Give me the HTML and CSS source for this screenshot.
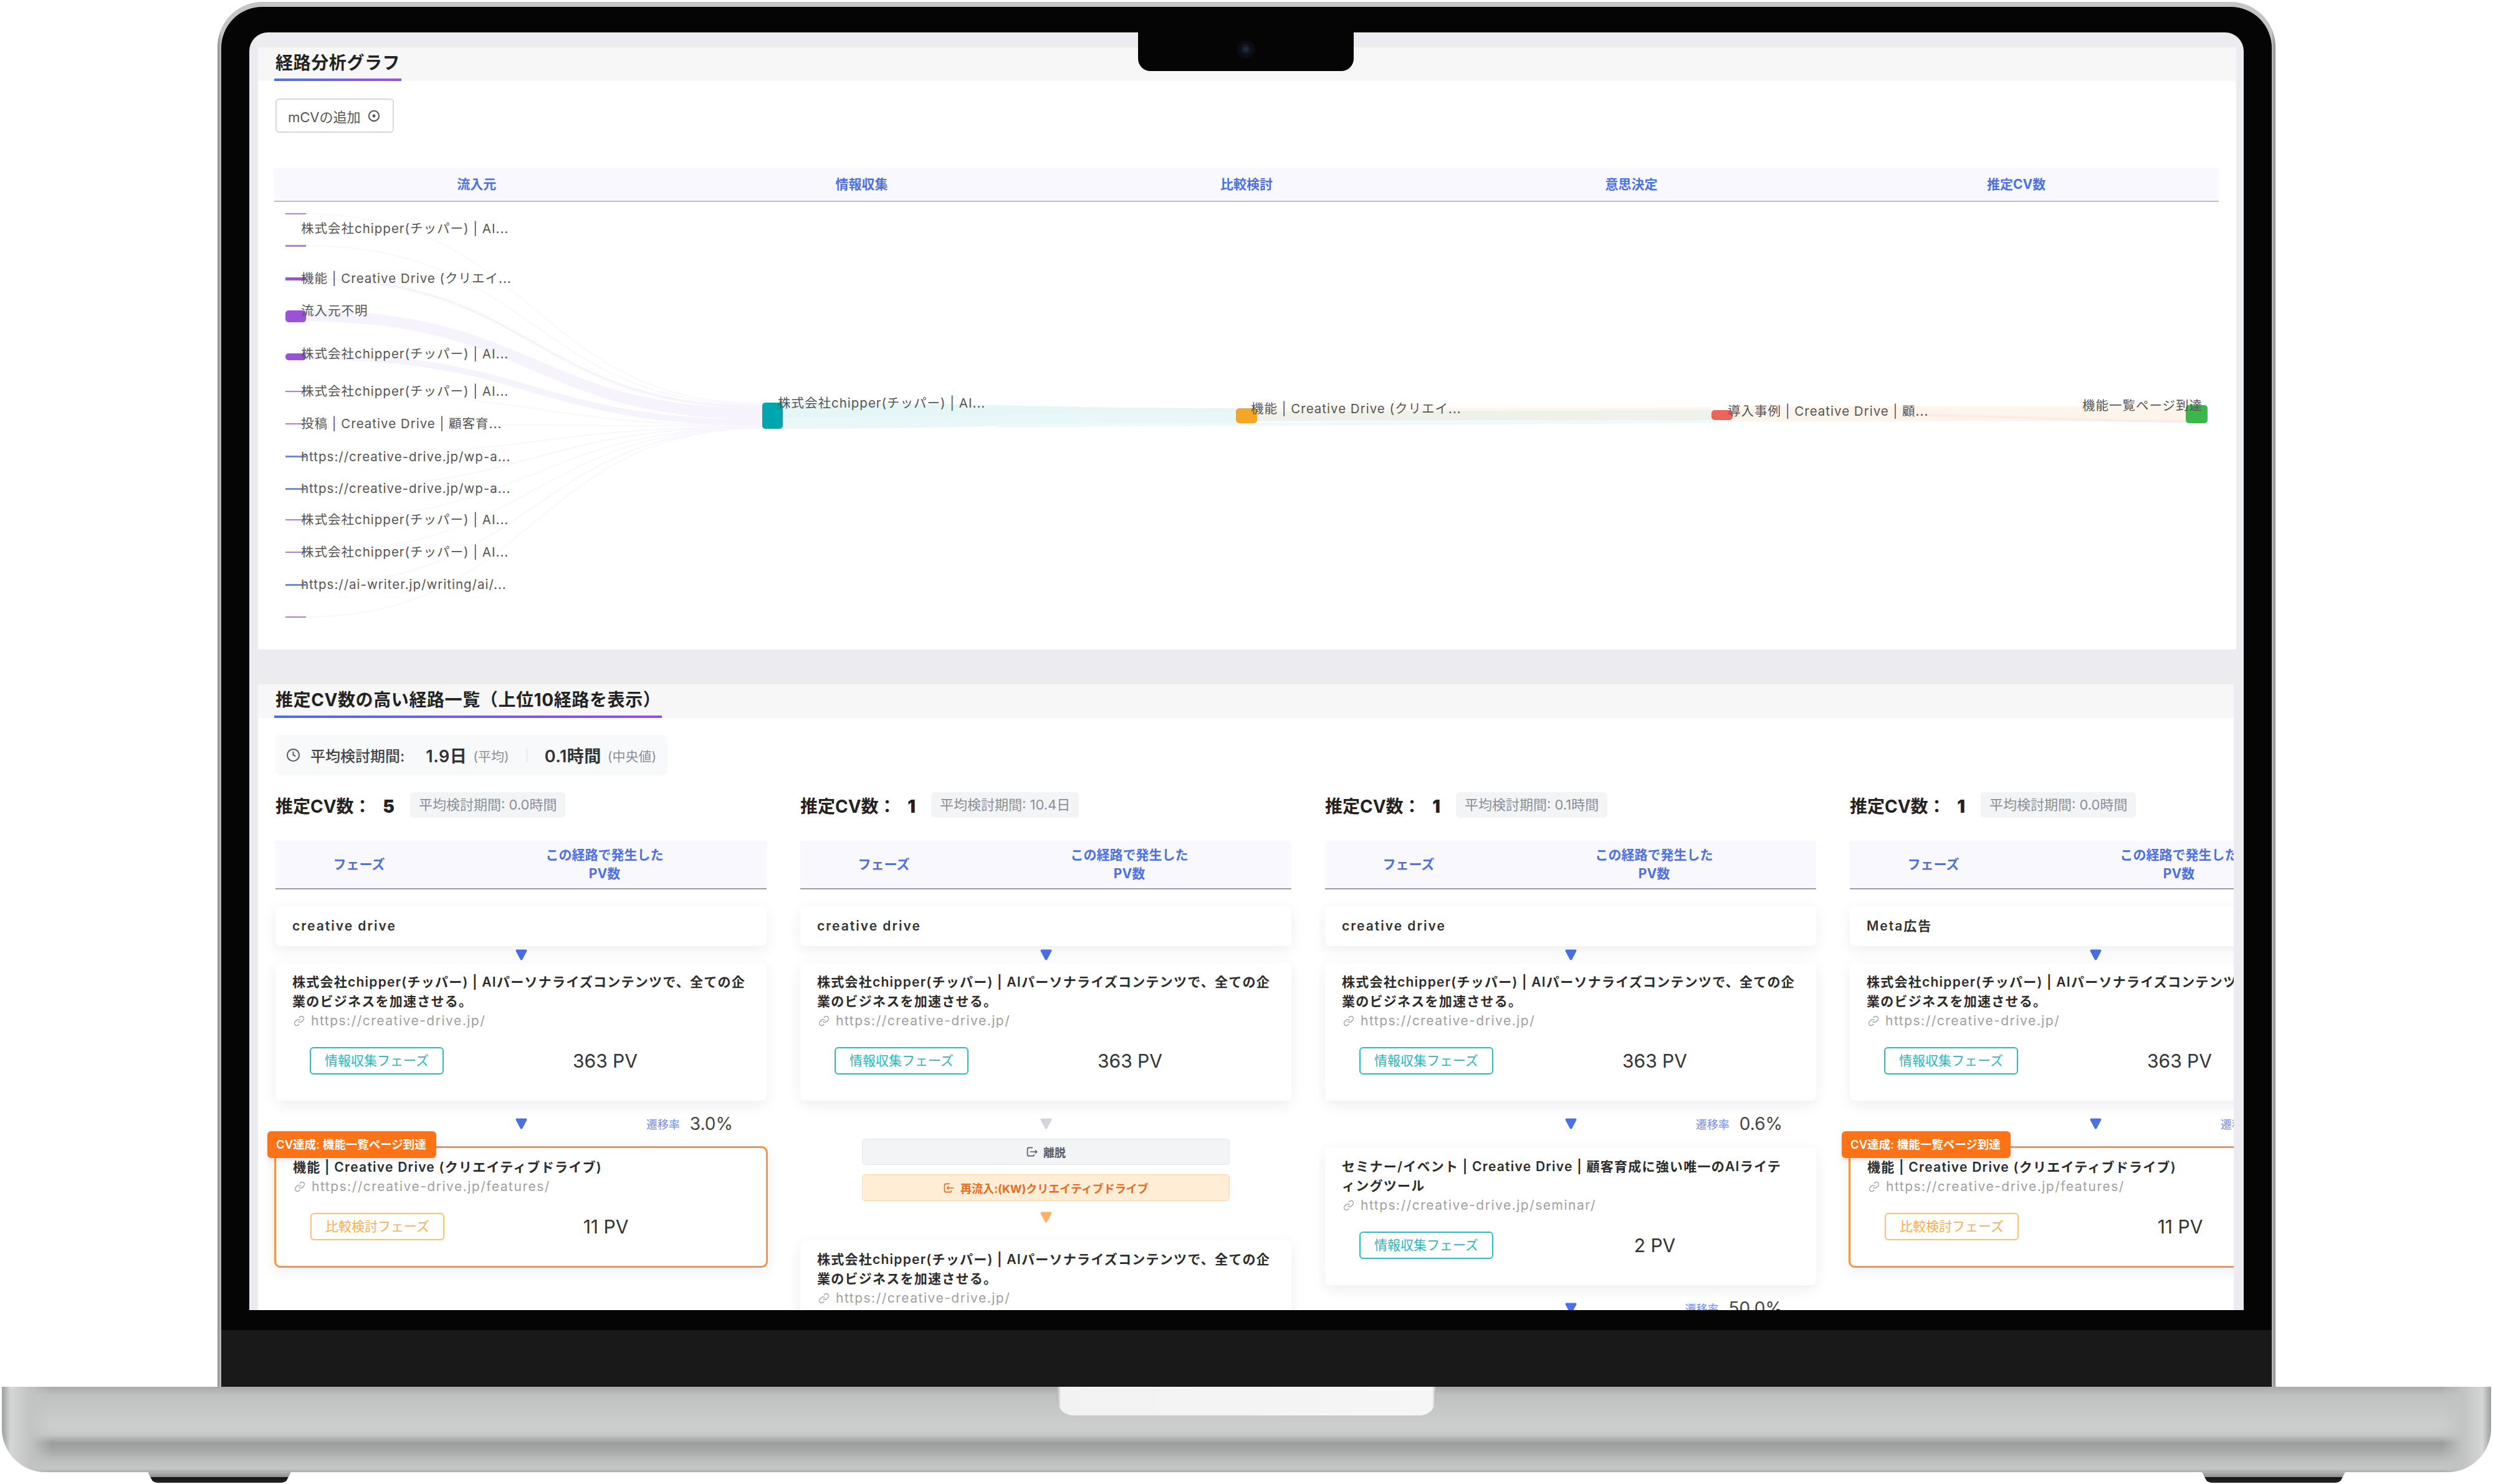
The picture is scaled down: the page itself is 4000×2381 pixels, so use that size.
FILE: index.html
```html
<!DOCTYPE html>
<html lang="ja">
<head>
    <meta charset="UTF-8">
    <title>経路分析グラフ</title>
    <link rel="stylesheet" href="styles.css">
</head>
<body>
    <svg class="defs" aria-hidden="true">
        <symbol id="tri" viewBox="0 0 19 18">
            <path d="M2.5 0.5h14c1.6 0 2.4 1.4 1.7 2.7l-7 13.2c-.8 1.4-2.6 1.4-3.4 0l-7-13.2C.1 1.9.9.5 2.5.5z"/>
        </symbol>
        <symbol id="link" viewBox="0 0 24 24">
            <path d="M10 13a5 5 0 0 0 7.54.54l3-3a5 5 0 0 0-7.07-7.07l-1.72 1.71"/>
            <path d="M14 11a5 5 0 0 0-7.54-.54l-3 3a5 5 0 0 0 7.07 7.07l1.71-1.71"/>
        </symbol>
    </svg>

    <div class="laptop">
        <div class="lid">
            <div class="bezel">
                <div class="notch"><span class="camera"></span></div>
                <div class="screen">

                    <section class="panel">
                        <div class="panel-head"><h2 class="section-title">経路分析グラフ</h2></div>
                        <div class="graph-body">
                            <button class="add-btn">mCVの追加
                                <svg class="add-icon" viewBox="0 0 20 20"><circle cx="10" cy="10" r="8.2"/><circle class="dot" cx="10" cy="10" r="2.4"/></svg>
                            </button>
                            <div class="phase-head">
                                <span>流入元</span><span>情報収集</span><span>比較検討</span><span>意思決定</span><span>推定CV数</span>
                            </div>
                            <svg class="sankey" viewBox="440 323 3120 719">
                                <g class="links-in" fill="none">
                                    <path class="thin" stroke-width="2" d="M491 342C857 342 857 647 1223 647"/>
                                    <path class="thin" stroke-width="2" d="M491 393C857 393 857 649 1223 649"/>
                                    <path stroke-width="4" d="M491 446C857 446 857 652 1223 652"/>
                                    <path stroke-width="18" d="M491 506C857 506 857 663 1223 663"/>
                                    <path stroke-width="10" d="M491 571C857 571 857 677 1223 677"/>
                                    <path class="thin" stroke-width="2" d="M491 627C857 627 857 682 1223 682"/>
                                    <path class="thin" stroke-width="2" d="M491 679C857 679 857 683 1223 683"/>
                                    <path class="blue" stroke-width="2" d="M491 731C857 731 857 684 1223 684"/>
                                    <path class="blue" stroke-width="2" d="M491 783C857 783 857 684 1223 684"/>
                                    <path class="thin" stroke-width="2" d="M491 833C857 833 857 685 1223 685"/>
                                    <path class="thin" stroke-width="2" d="M491 885C857 885 857 685 1223 685"/>
                                    <path class="blue" stroke-width="2" d="M491 937C857 937 857 686 1223 686"/>
                                    <path class="thin" stroke-width="2" d="M491 989C857 989 857 686 1223 686"/>
                                </g>
                                <g fill="none">
                                    <path stroke="#e6f6f7" stroke-width="24" d="M1256 657C1620 657 1620 666 1983 666"/>
                                    <path stroke="#e9f7f8" stroke-width="18" d="M1256 678C1620 678 1620 668 1983 668"/>
                                    <path stroke="#eef9fa" stroke-width="5" d="M1600 682C2000 680 2400 676 2780 675"/>
                                    <path stroke="#fdf6ec" stroke-width="5" d="M2017 656C2380 656 2380 655 2746 655"/>
                                    <path stroke="#eef2eb" stroke-width="16" d="M2017 667C2380 667 2380 665 2746 665"/>
                                    <path stroke="#fdf5ec" stroke-width="24" d="M2780 663C3140 663 3140 663 3507 663"/>
                                    <path stroke="#fcebe6" stroke-width="4" d="M3060 664C3280 668 3300 674 3507 675"/>
                                </g>
                                <g class="nodes">
                                    <rect fill="#b27be6" x="458" y="341" width="33" height="2"/>
                                    <rect fill="#b27be6" x="458" y="392" width="33" height="3"/>
                                    <rect fill="#9a52d6" x="458" y="444" width="33" height="5"/>
                                    <rect fill="#9a52d6" x="458" y="497" width="33" height="19" rx="5"/>
                                    <rect fill="#9a52d6" x="458" y="566" width="33" height="11" rx="5"/>
                                    <rect fill="#b27be6" x="458" y="626" width="33" height="2"/>
                                    <rect fill="#b27be6" x="458" y="678" width="33" height="2"/>
                                    <rect fill="#6c8bf0" x="458" y="730" width="33" height="3"/>
                                    <rect fill="#6c8bf0" x="458" y="782" width="33" height="3"/>
                                    <rect fill="#b27be6" x="458" y="832" width="33" height="2"/>
                                    <rect fill="#b27be6" x="458" y="884" width="33" height="2"/>
                                    <rect fill="#6c8bf0" x="458" y="936" width="33" height="3"/>
                                    <rect fill="#b27be6" x="458" y="988" width="33" height="2"/>
                                    <rect fill="#00a6ad" x="1223" y="645" width="33" height="42" rx="5"/>
                                    <rect fill="#f5a623" x="1983" y="654" width="34" height="24" rx="5"/>
                                    <rect fill="#e8675a" x="2746" y="657" width="34" height="16" rx="5"/>
                                    <rect fill="#3cb54a" x="3507" y="649" width="35" height="29" rx="5"/>
                                </g>
                                <g class="labels">
                                    <text x="483" y="373">株式会社chipper(チッパー) | AI...</text>
                                    <text x="483" y="453">機能 | Creative Drive (クリエイ...</text>
                                    <text x="483" y="505">流入元不明</text>
                                    <text x="483" y="574">株式会社chipper(チッパー) | AI...</text>
                                    <text x="483" y="634">株式会社chipper(チッパー) | AI...</text>
                                    <text x="483" y="686">投稿 | Creative Drive | 顧客育...</text>
                                    <text x="483" y="739">https://creative-drive.jp/wp-a...</text>
                                    <text x="483" y="790">https://creative-drive.jp/wp-a...</text>
                                    <text x="483" y="840">株式会社chipper(チッパー) | AI...</text>
                                    <text x="483" y="892">株式会社chipper(チッパー) | AI...</text>
                                    <text x="483" y="944">https://ai-writer.jp/writing/ai/...</text>
                                    <text x="1248" y="653">株式会社chipper(チッパー) | AI...</text>
                                    <text x="2007" y="662">機能 | Creative Drive (クリエイ...</text>
                                    <text x="2772" y="666">導入事例 | Creative Drive | 顧...</text>
                                    <text x="3534" y="657" text-anchor="end">機能一覧ページ到達</text>
                                </g>
                            </svg>
                        </div>
                    </section>

                    <section class="panel routes-panel">
                        <div class="panel-head"><h2 class="section-title">推定CV数の高い経路一覧（上位10経路を表示）</h2></div>
                        <div class="routes-body">
                            <div class="period-box">
                                <svg class="clock" viewBox="0 0 24 24"><circle cx="12" cy="12" r="10"/><path d="M12 6v6l4 2"/></svg>
                                <span class="period-label">平均検討期間:</span>
                                <span class="period-value">1.9日</span>
                                <span class="period-note">(平均)</span>
                                <span class="period-sep"></span>
                                <span class="period-value">0.1時間</span>
                                <span class="period-note">(中央値)</span>
                            </div>

                            <div class="routes">
                                <!-- route 1 -->
                                <div class="route">
                                    <div class="route-top"><span class="cv-count">推定CV数： <b>5</b></span><span class="pill">平均検討期間: 0.0時間</span></div>
                                    <div class="route-head"><span>フェーズ</span><span>この経路で発生した<br>PV数</span></div>
                                    <div class="card source">creative drive</div>
                                    <div class="step"><svg class="arrow"><use href="#tri"/></svg></div>
                                    <div class="card">
                                        <div class="page-title">株式会社chipper(チッパー) | AIパーソナライズコンテンツで、全ての企業のビジネスを加速させる。</div>
                                        <div class="page-url"><svg class="link-icon"><use href="#link"/></svg>https://creative-drive.jp/</div>
                                        <div class="page-row"><span class="badge teal">情報収集フェーズ</span><span class="pv">363 PV</span></div>
                                    </div>
                                    <div class="connector"><span></span><svg class="arrow"><use href="#tri"/></svg><span class="rate"><small>遷移率</small>3.0%</span></div>
                                    <div class="card goal">
                                        <span class="cv-badge">CV達成: 機能一覧ページ到達</span>
                                        <div class="page-title">機能 | Creative Drive (クリエイティブドライブ)</div>
                                        <div class="page-url"><svg class="link-icon"><use href="#link"/></svg>https://creative-drive.jp/features/</div>
                                        <div class="page-row"><span class="badge amber">比較検討フェーズ</span><span class="pv">11 PV</span></div>
                                    </div>
                                </div>

                                <!-- route 2 -->
                                <div class="route">
                                    <div class="route-top"><span class="cv-count">推定CV数： <b>1</b></span><span class="pill">平均検討期間: 10.4日</span></div>
                                    <div class="route-head"><span>フェーズ</span><span>この経路で発生した<br>PV数</span></div>
                                    <div class="card source">creative drive</div>
                                    <div class="step"><svg class="arrow"><use href="#tri"/></svg></div>
                                    <div class="card">
                                        <div class="page-title">株式会社chipper(チッパー) | AIパーソナライズコンテンツで、全ての企業のビジネスを加速させる。</div>
                                        <div class="page-url"><svg class="link-icon"><use href="#link"/></svg>https://creative-drive.jp/</div>
                                        <div class="page-row"><span class="badge teal">情報収集フェーズ</span><span class="pv">363 PV</span></div>
                                    </div>
                                    <div class="connector short"><span></span><svg class="arrow gray"><use href="#tri"/></svg><span></span></div>
                                    <div class="exit-box">
                                        <svg class="box-icon" viewBox="0 0 24 24"><path d="M13 4H6a3 3 0 0 0-3 3v10a3 3 0 0 0 3 3h7a3 3 0 0 0 3-3"/><path d="M8 12h13M18 9l3 3-3 3"/></svg>離脱
                                    </div>
                                    <div class="return-box">
                                        <svg class="box-icon" viewBox="0 0 24 24"><path d="M13 4H6a3 3 0 0 0-3 3v10a3 3 0 0 0 3 3h7a3 3 0 0 0 3-3"/><path d="M21 12H8M11 9l-3 3 3 3"/></svg>再流入:(KW)クリエイティブドライブ
                                    </div>
                                    <div class="step-return"><svg class="arrow orange"><use href="#tri"/></svg></div>
                                    <div class="card">
                                        <div class="page-title">株式会社chipper(チッパー) | AIパーソナライズコンテンツで、全ての企業のビジネスを加速させる。</div>
                                        <div class="page-url"><svg class="link-icon"><use href="#link"/></svg>https://creative-drive.jp/</div>
                                    </div>
                                </div>

                                <!-- route 3 -->
                                <div class="route">
                                    <div class="route-top"><span class="cv-count">推定CV数： <b>1</b></span><span class="pill">平均検討期間: 0.1時間</span></div>
                                    <div class="route-head"><span>フェーズ</span><span>この経路で発生した<br>PV数</span></div>
                                    <div class="card source">creative drive</div>
                                    <div class="step"><svg class="arrow"><use href="#tri"/></svg></div>
                                    <div class="card">
                                        <div class="page-title">株式会社chipper(チッパー) | AIパーソナライズコンテンツで、全ての企業のビジネスを加速させる。</div>
                                        <div class="page-url"><svg class="link-icon"><use href="#link"/></svg>https://creative-drive.jp/</div>
                                        <div class="page-row"><span class="badge teal">情報収集フェーズ</span><span class="pv">363 PV</span></div>
                                    </div>
                                    <div class="connector"><span></span><svg class="arrow"><use href="#tri"/></svg><span class="rate"><small>遷移率</small>0.6%</span></div>
                                    <div class="card">
                                        <div class="page-title">セミナー/イベント | Creative Drive | 顧客育成に強い唯一のAIライテ<br>ィングツール</div>
                                        <div class="page-url"><svg class="link-icon"><use href="#link"/></svg>https://creative-drive.jp/seminar/</div>
                                        <div class="page-row"><span class="badge teal">情報収集フェーズ</span><span class="pv">2 PV</span></div>
                                    </div>
                                    <div class="connector"><span></span><svg class="arrow"><use href="#tri"/></svg><span class="rate"><small>遷移率</small>50.0%</span></div>
                                </div>

                                <!-- route 4 -->
                                <div class="route">
                                    <div class="route-top"><span class="cv-count">推定CV数： <b>1</b></span><span class="pill">平均検討期間: 0.0時間</span></div>
                                    <div class="route-head"><span>フェーズ</span><span>この経路で発生した<br>PV数</span></div>
                                    <div class="card source">Meta広告</div>
                                    <div class="step"><svg class="arrow"><use href="#tri"/></svg></div>
                                    <div class="card">
                                        <div class="page-title">株式会社chipper(チッパー) | AIパーソナライズコンテンツで、全ての企業のビジネスを加速させる。</div>
                                        <div class="page-url"><svg class="link-icon"><use href="#link"/></svg>https://creative-drive.jp/</div>
                                        <div class="page-row"><span class="badge teal">情報収集フェーズ</span><span class="pv">363 PV</span></div>
                                    </div>
                                    <div class="connector"><span></span><svg class="arrow"><use href="#tri"/></svg><span class="rate"><small>遷移率</small>3.0%</span></div>
                                    <div class="card goal">
                                        <span class="cv-badge">CV達成: 機能一覧ページ到達</span>
                                        <div class="page-title">機能 | Creative Drive (クリエイティブドライブ)</div>
                                        <div class="page-url"><svg class="link-icon"><use href="#link"/></svg>https://creative-drive.jp/features/</div>
                                        <div class="page-row"><span class="badge amber">比較検討フェーズ</span><span class="pv">11 PV</span></div>
                                    </div>
                                </div>
                            </div>
                        </div>
                    </section>

                </div>
                <div class="chin-black"></div>
                <div class="chin"></div>
            </div>
        </div>
        <div class="base">
            <div class="thumb"></div>
        </div>
        <div class="feet"><span class="foot"></span><span class="foot"></span></div>
    </div>
</body>
</html>
```

FILE: styles.css
```css
* {
    box-sizing: border-box;
}

body {
    margin: 0;
    width: 4000px;
    height: 2381px;
    overflow: hidden;
    background: #fff;
    font-family: Inter, "Noto Sans CJK JP", sans-serif;
    color: #333;
}

.defs {
    display: none;
}

.laptop {
    display: flex;
    flex-direction: column;
    align-items: center;
    padding-top: 3px;
}

/* lid */
.lid {
    width: 3302px;
    height: 2222px;
    padding: 8px 6px 0;
    background: linear-gradient(90deg, #8c8d8e, #c4c5c6 0.2%, #c4c5c6 99.8%, #8c8d8e);
    border-radius: 72px 72px 0 0;
}

.bezel {
    position: relative;
    height: 100%;
    padding: 0;
    display: flex;
    flex-direction: column;
    background: #050505;
    border-radius: 66px 66px 0 0;
    border-top: 41px solid #050505;
    overflow: hidden;
}

.notch {
    position: absolute;
    z-index: 5;
    top: -2px;
    left: 1471px;
    width: 346px;
    height: 64px;
    background: #050505;
    border-radius: 0 0 20px 20px;
    display: flex;
    align-items: center;
    justify-content: center;
}

.camera {
    width: 28px;
    height: 28px;
    border-radius: 50%;
    background: radial-gradient(circle, #1f3350 0, #141c2a 28%, #0c0e12 45%, #0a0b0d 100%);
    margin-top: -6px;
}

.screen {
    flex: 0 0 2050px;
    margin: 0 45px;
    padding: 24px 12px 0 14px;
    background: #ecebf0;
    border-radius: 30px 30px 0 0;
    overflow: hidden;
}

.chin-black {
    flex: 0 0 32px;
}

.chin {
    flex: 1;
    background: #191919;
}

/* panels */
.panel {
    background: #fff;
}

.panel-head {
    height: 54px;
    padding-left: 26px;
    background: #f7f7f7;
}

.section-title {
    display: inline-block;
    height: 54px;
    margin: 0;
    padding: 6px 2px 0;
    font-size: 28px;
    line-height: 38px;
    font-weight: 700;
    letter-spacing: 0.6px;
    color: #222;
    background: linear-gradient(90deg, #4a73e8, #9b4fe8) left bottom / 100% 4px no-repeat;
}

.graph-body {
    height: 912px;
    padding: 28px 28px 0 26px;
}

.add-btn {
    display: flex;
    align-items: center;
    gap: 11px;
    width: 190px;
    height: 55px;
    margin-left: 2px;
    padding: 0 0 0 18px;
    border: 2px solid #d8d8d8;
    border-radius: 6px;
    background: #fff;
    font: 22px Inter, "Noto Sans CJK JP", sans-serif;
    color: #555;
}

.add-icon {
    width: 20px;
    height: 20px;
    fill: none;
    stroke: #555;
    stroke-width: 2;
}

.add-icon .dot {
    fill: #555;
    stroke: none;
}

.phase-head {
    display: grid;
    grid-template-columns: repeat(5, 1fr);
    height: 55px;
    margin-top: 56px;
    padding: 0 16px 4px;
    align-items: center;
    background: #faf8ff;
    border-bottom: 2px solid #bcbcc2;
    text-align: center;
    font-size: 21px;
    font-weight: 700;
    color: #4a70e6;
}

.sankey {
    display: block;
    width: 3120px;
    height: 719px;
}

.links-in path {
    stroke: #f7f3fc;
}

.links-in path.thin {
    stroke: #f9f7fd;
}

.links-in path.blue {
    stroke: #f6f7fe;
}

.labels text {
    font-size: 20.5px;
    letter-spacing: 1px;
    fill: #555;
}

/* routes */
.routes-panel {
    margin: 56px 4px 0 0;
    overflow: hidden;
}

.routes-body {
    padding: 27px 0 0 28px;
}

.period-box {
    display: flex;
    align-items: center;
    width: 629px;
    height: 65px;
    padding-left: 17px;
    background: #f8f9fa;
    border-radius: 8px;
    font-size: 24px;
}

.clock {
    width: 23px;
    height: 23px;
    margin-right: 16px;
    fill: none;
    stroke: #555;
    stroke-width: 2;
}

.period-label {
    font-weight: 500;
    color: #444;
    margin-right: 34px;
}

.period-value {
    font-size: 27px;
    font-weight: 600;
    letter-spacing: 0.5px;
    color: #333;
    margin-right: 10px;
}

.period-note {
    font-size: 21px;
    color: #8a8f98;
}

.period-sep {
    width: 1px;
    height: 22px;
    margin: 0 28px;
    background: #d8dade;
}

.routes {
    display: flex;
    gap: 54px;
    margin-top: 27px;
}

.route {
    flex: 0 0 788px;
    min-width: 0;
    display: flex;
    flex-direction: column;
}

.route-top {
    display: flex;
    align-items: center;
    gap: 25px;
    height: 41px;
}

.cv-count {
    font-size: 28px;
    font-weight: 700;
    color: #222;
}

.cv-count b {
    margin-left: 12px;
}

.pill {
    padding: 0 14px;
    height: 41px;
    line-height: 41px;
    background: #f3f4f6;
    border-radius: 6px;
    font-size: 22px;
    color: #8a8f98;
}

.route-head {
    display: grid;
    grid-template-columns: 268px 520px;
    align-items: center;
    flex: 0 0 78px;
    margin-top: 37px;
    background: #faf8ff;
    border-bottom: 2px solid #9d9da6;
    text-align: center;
    font-size: 21px;
    line-height: 30px;
    font-weight: 700;
    white-space: nowrap;
    color: #4a70e6;
}

.card {
    position: relative;
    flex: none;
    padding: 15px 27px 42px;
    background: #fff;
    border-radius: 8px;
    box-shadow: 0 6px 22px rgba(30, 40, 60, 0.08);
}

.card.source {
    height: 64px;
    margin-top: 27px;
    padding: 0 27px;
    line-height: 64px;
    font-size: 21px;
    font-weight: 600;
    letter-spacing: 2px;
    color: #333;
}

.step {
    display: flex;
    justify-content: center;
    flex: 0 0 27px;
    padding-top: 5px;
}

.arrow {
    width: 19px;
    height: 18px;
    fill: #4a70e6;
}

.arrow.gray {
    fill: #d2d6dc;
}

.arrow.orange {
    fill: #fdb066;
}

.page-title {
    font-size: 21px;
    line-height: 31px;
    font-weight: 600;
    color: #2c2c2c;
    letter-spacing: 1.25px;
}

.page-url {
    display: flex;
    align-items: center;
    font-size: 21px;
    line-height: 31px;
    color: #a0a0a0;
    letter-spacing: 1.5px;
}

.link-icon {
    width: 18px;
    height: 18px;
    margin: 0 10px 0 2px;
    fill: none;
    stroke: #aaa;
    stroke-width: 2;
}

.page-row {
    display: grid;
    grid-template-columns: 213px 522px;
    align-items: center;
    margin: 27px -29px 0 0;
    padding-left: 28px;
}

.badge {
    justify-self: start;
    width: 215px;
    height: 44px;
    line-height: 40px;
    border: 2px solid;
    border-radius: 6px;
    text-align: center;
    font-size: 21px;
}

.badge.teal {
    color: #2bb5bd;
    border-color: #2bbcc4;
}

.badge.amber {
    color: #ffab4a;
    border-color: #ffbe70;
}

.pv {
    text-align: center;
    font-size: 30px;
    color: #333;
}

.connector {
    display: grid;
    grid-template-columns: 1fr auto 1fr;
    align-items: center;
    flex: 0 0 75px;
    align-content: start;
    padding-top: 16px;
}

.connector > * {
    height: 41px;
}

.connector .arrow {
    height: 18px;
}

.connector.short {
    flex-basis: 61px;
}

.rate {
    justify-self: end;
    display: flex;
    align-items: center;
    gap: 16px;
    padding-right: 54px;
    font-size: 28px;
    color: #444;
}

.rate small {
    font-size: 18px;
    color: #6f8df0;
}

.goal {
    margin: -2px -2px 0;
    padding-bottom: 41px;
    border: 3px solid #ff9240;
    border-radius: 10px;
}

.cv-badge {
    position: absolute;
    top: -27px;
    left: -14px;
    width: 271px;
    height: 43px;
    line-height: 43px;
    padding-left: 14px;
    background: #ff7316;
    border-radius: 6px;
    box-shadow: 0 3px 8px rgba(0, 0, 0, 0.12);
    font-size: 18.5px;
    font-weight: 600;
    color: #fff;
    white-space: nowrap;
}

.exit-box,
.return-box {
    display: flex;
    align-items: center;
    justify-content: center;
    gap: 8px;
    flex: none;
    margin: 0 99px;
    border-radius: 5px;
    font-size: 18px;
    font-weight: 700;
}

.exit-box {
    height: 42px;
    background: #f3f4f6;
    border: 1px solid #e5e7eb;
    color: #555c68;
}

.return-box {
    height: 43px;
    margin-top: 15px;
    background: #ffedd5;
    border: 1px solid #fed7aa;
    color: #ea6a1f;
}

.box-icon {
    width: 20px;
    height: 20px;
    fill: none;
    stroke: currentColor;
    stroke-width: 2;
}

.step-return {
    display: flex;
    justify-content: center;
    flex: 0 0 63px;
    padding-top: 17px;
}

/* base of the laptop */
.base {
    position: relative;
    width: 3994px;
    height: 137px;
    background:
        linear-gradient(90deg, #9d9e9f 0, #d5d6d6 0.35%, #c2c3c3 1.1%, rgba(200, 201, 201, 0) 2%, rgba(200, 201, 201, 0) 98%, #c2c3c3 98.9%, #d5d6d6 99.65%, #9d9e9f 100%),
        linear-gradient(180deg, #a9aaaa 0, #bfc0c0 10%, #cccdcd 45%, #c6c7c7 56%, #9c9d9d 66%, #a3a4a4 73%, #bcbdbd 86%, #c6c6c6 96%, #a9aaaa 100%);
    border-radius: 0 0 70px 70px;
}

.thumb {
    width: 608px;
    height: 46px;
    margin: 0 auto;
    background: linear-gradient(90deg, #b0b0b0, #f2f2f2 1%, #f6f6f6 99%, #b0b0b0);
    border-radius: 0 0 26px 26px;
}

.feet {
    display: flex;
    justify-content: space-between;
    width: 3526px;
}

.foot {
    width: 230px;
    height: 17px;
    background: linear-gradient(180deg, #b5b5b5 0, #8c8c8c 45%, #141414 50%, #262626 100%);
    border-radius: 0 0 30px 30px;
    clip-path: polygon(0 0, 100% 0, 96% 100%, 4% 100%);
}
```
